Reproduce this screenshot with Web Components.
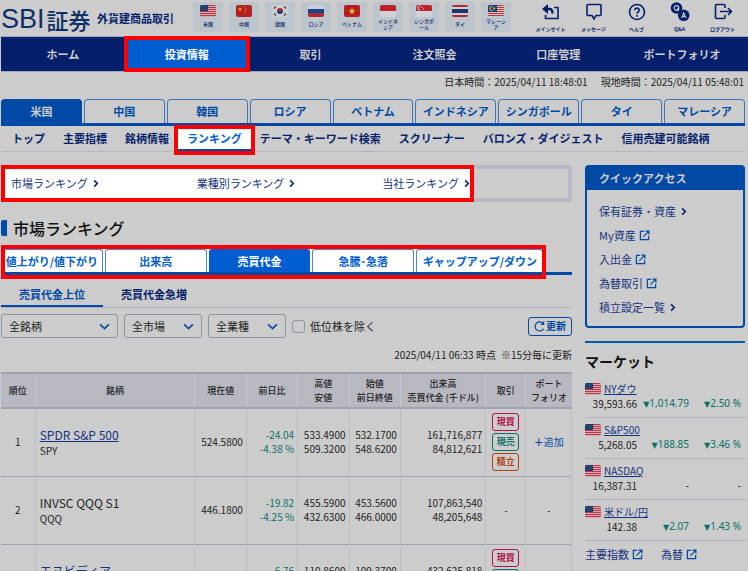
<!DOCTYPE html>
<html lang="ja">
<head>
<meta charset="utf-8">
<title>SBI証券 外貨建商品取引</title>
<style>
  html { background: #ccc; }
  body {
    margin: 0;
    height: 100vh;
    overflow: hidden;
    color: #222;
    font: 11px/14px "Noto Sans CJK JP", sans-serif;
    --navy: #061f6b;
    --blue: #0049a4;
    --bright: #005dd0;
    --line: #a0a4b2;
    --mark: #f00;
  }
</style>
</head>
<body>
<trade-app></trade-app>

<script>
const base = `
  * { box-sizing: border-box; }
  a { color: inherit; text-decoration: none; }
  button { font: inherit; color: inherit; background: none; border: 0; padding: 0; margin: 0; }
  svg { display: block; }
`;

function define(name, css, html, setup) {
  const template = document.createElement('template');
  template.innerHTML = '<style>' + base + css + '</style>' + html;

  class Part extends HTMLElement {
    static get observedAttributes() {
      return ['code', 'name'];
    }

    constructor() {
      super();
      this.attachShadow({ mode: 'open' });
      this.shadowRoot.appendChild(template.content.cloneNode(true));
    }

    connectedCallback() {
      if (setup) setup(this, this.shadowRoot);
    }

    // icons get their name from the element around them, after they connect
    attributeChangedCallback() {
      if (setup && this.isConnected) setup(this, this.shadowRoot);
    }
  }
  window.customElements.define(name, Part);
}

const flags = {
  us: '<path fill="#d8a9ae" d="M0 0h16v12H0z"/><path stroke="#b8374b" d="M0 .5h16M0 2.5h16M0 4.5h16M0 6.5h16M0 8.5h16M0 10.5h16"/><path fill="#1b3a68" d="M0 0h8v6H0z"/><path stroke="#657b9b" stroke-width=".6" stroke-dasharray=".6 1" d="M1 1.5h6M1 3h6M1 4.5h6"/>',
  cn: '<path fill="#b51f22" d="M0 0h16v12H0z"/><path fill="#d9b32a" d="M4 2l.6 1.5h1.6L5 4.500l.5 1.600L4 5.200 2.600 6.100 3 4.500 1.800 3.500h1.600z"/><path fill="#d9b32a" d="M8 1h1v1H8zM9.500 3h1v1h-1zM9.500 5h1v1h-1zM8 6.700h1v1H8z"/>',
  kr: '<path fill="#ccd0d3" d="M0 0h16v12H0z"/><path fill="#b22234" d="M5 6a3 3 0 016 0z"/><path fill="#173f82" d="M5 6a3 3 0 006 0z"/><path stroke="#222" stroke-width="1.600" stroke-dasharray=".7 .3" d="M2 3.500l2-2M12 1.500l2 2M2 8.500l2 2M12 10.500l2-2"/>',
  ru: '<path fill="#ccd0d6" d="M0 0h16v4H0z"/><path fill="#14458f" d="M0 4h16v4H0z"/><path fill="#b32630" d="M0 8h16v4H0z"/>',
  vn: '<path fill="#b51f22" d="M0 0h16v12H0z"/><path fill="#ddc52a" d="M8 2.500l.9 2.500h2.600L9.400 6.600l.8 2.600L8 7.700 5.800 9.200l.8-2.600L4.500 5h2.600z"/>',
  id: '<path fill="#c0222c" d="M0 0h16v6H0z"/><path fill="#d0d3d6" d="M0 6h16v6H0z"/>',
  sg: '<path fill="#c0222c" d="M0 0h16v6H0z"/><path fill="#d0d3d6" d="M0 6h16v6H0z"/><path fill="none" stroke="#ddd" d="M4.500 1.200a2 2 0 100 3.600"/><path fill="#ddd" d="M5.500 2h1v1h-1zM7 3.500h1v1H7z"/>',
  th: '<path fill="#b32630" d="M0 0h16v12H0z"/><path fill="#ccd0d6" d="M0 2h16v8H0z"/><path fill="#1d3768" d="M0 4h16v4H0z"/>',
  my: '<path fill="#ccc9c9" d="M0 0h16v12H0z"/><path stroke="#bd3440" d="M0 .5h16M0 2.500h16M0 4.500h16M0 6.500h16M0 8.500h16M0 10.500h16"/><path fill="#183c7a" d="M0 0h9v7H0z"/><path fill="none" stroke="#d8bd2d" stroke-width="1.200" d="M4.500 1.600a2 2 0 100 3.800"/><path fill="#d8bd2d" d="M5.200 2.500h2v2h-2z"/>'
};

define('flag-icon', `
  :host { display: block; width: 16px; height: 12px; border-radius: 2px; overflow: hidden; flex: none; }
`, '<svg width="16" height="12" viewBox="0 0 16 12"></svg>', (el, root) => {
  root.querySelector('svg').innerHTML = flags[el.getAttribute('code')] || '';
});

const icons = {
  back: '<path d="M13 5.500h4v11H4.500V13"/><path stroke-width="2.400" d="M5 7h3.500q3 0 3 4.500"/><path fill="currentColor" stroke="none" d="M1 7l6-5v10z"/>',
  message: '<path d="M3.500 2.500h12.500a1 1 0 011 1v9a1 1 0 01-1 1h-4l-2 3.500-2-3.500h-4a1 1 0 01-1-1v-9a1 1 0 011-1z"/>',
  help: '<circle cx="10" cy="10" r="7.500"/><path d="M7.800 8.300c0-3 4.500-2.800 4.400 0 0 1.700-2.200 1.700-2.200 3.500M10 13v1.800"/>',
  qa: '<circle cx="6.500" cy="6" r="5.800" fill="currentColor" stroke="none"/><circle cx="13.700" cy="13.300" r="5.800" fill="currentColor" stroke="none"/><circle cx="6.500" cy="6" r="2.300" stroke="#ccc" stroke-width="1.200"/><path stroke="#ccc" stroke-width="1.200" d="M7 6.500l2 2M11.700 16l2-5 2 5M12.400 14.500h2.600"/>',
  logout: '<path d="M12 6V3.500a1 1 0 00-1-1H3.500a1 1 0 00-1 1v12a1 1 0 001 1H11a1 1 0 001-1V13M7 9.500h11M15 6l3.500 3.500L15 13"/>',
  arrow: '<path stroke-width="3.500" d="M7 3l7 7-7 7"/>',
  down: '<path stroke-width="3" d="M2 6l8 8 8-8"/>',
  window: '<path stroke-width="2.200" d="M9 2.500H2.500v15h15V11M11.500 2h6.500v6.500M18 2L8 12"/>',
  reload: '<path stroke-width="2.200" d="M17 5a8.300 8.300 0 10.500 9M17.500 1v5h-5"/>'
};

define('line-icon', `
  :host { display: inline-block; width: 20px; height: 20px; flex: none; }
  svg { width: 100%; height: 100%; }
`, '<svg viewBox="0 0 20 20" fill="none" stroke="currentColor" stroke-width="1.6"></svg>', (el, root) => {
  root.querySelector('svg').innerHTML = icons[el.getAttribute('name')] || '';
});

define('country-tile', `
  :host { display: block; width: 30px; height: 30px; background: #bcc4cc; border-radius: 2px; color: var(--navy); }
  a { display: flex; flex-direction: column; align-items: center; height: 100%; padding: 3px 0 1px; }
  span { display: grid; place-content: center; flex: 1; width: 20px; font-size: 5px; line-height: 6px; text-align: center; font-weight: 500; }
`, '<a href="#"><flag-icon></flag-icon><span><slot></slot></span></a>', (el, root) => {
  root.querySelector('flag-icon').setAttribute('code', el.getAttribute('code'));
});

define('tool-link', `
  :host { display: block; width: 43px; color: var(--navy); }
  a { display: flex; flex-direction: column; align-items: center; gap: 3px; font-size: 5px; line-height: 8px; font-weight: 700; }
`, '<a href="#"><line-icon></line-icon><slot></slot></a>', (el, root) => {
  root.querySelector('line-icon').setAttribute('name', el.getAttribute('icon'));
});

define('site-header', `
  :host { display: flex; height: 37px; padding: 2px 8px 0 1px; border-bottom: 1px solid #a3a6bd; color: #0c2f66; }
  .logo { display: flex; align-items: center; gap: 2px; width: 96px; line-height: 30px; }
  .logo b { font: 400 27px/30px "Liberation Sans", sans-serif; }
  .logo span { font-size: 22px; font-weight: 500; }
  .sub { flex: 1; color: var(--navy); font-size: 11px; line-height: 32px; font-weight: 700; white-space: nowrap; }
  .tiles { display: flex; gap: 6px; }
  .tools { display: flex; margin-left: 18px; margin-right: -4px; }
`, `
  <a class="logo" href="#"><b>SBI</b><span>証券</span></a>
  <span class="sub">外貨建商品取引</span>
  <div class="tiles">
    <country-tile code="us">米国</country-tile>
    <country-tile code="cn">中国</country-tile>
    <country-tile code="kr">韓国</country-tile>
    <country-tile code="ru">ロシア</country-tile>
    <country-tile code="vn">ベトナム</country-tile>
    <country-tile code="id">インドネシア</country-tile>
    <country-tile code="sg">シンガポール</country-tile>
    <country-tile code="th">タイ</country-tile>
    <country-tile code="my">マレーシア</country-tile>
  </div>
  <div class="tools">
    <tool-link icon="back">メインサイト</tool-link>
    <tool-link icon="message">メッセージ</tool-link>
    <tool-link icon="help">ヘルプ</tool-link>
    <tool-link icon="qa">Q&amp;A</tool-link>
    <tool-link icon="logout">ログアウト</tool-link>
  </div>
`);

define('global-nav', `
  :host { display: block; margin-left: 1px; padding-right: 4px; background: var(--navy); color: #ccc; border-bottom: 1px solid #a3a6bd; }
  nav { display: grid; grid-template-columns: repeat(6, 1fr); }
  a { display: block; text-align: center; line-height: 34px; font-weight: 700; }
  a.on { background: var(--bright); color: #fff; outline: 4px solid var(--mark); outline-offset: -3px; }
`, `
  <nav>
    <a href="#">ホーム</a><a class="on" href="#">投資情報</a><a href="#">取引</a>
    <a href="#">注文照会</a><a href="#">口座管理</a><a href="#">ポートフォリオ</a>
  </nav>
`);

define('clock-bar', `
  :host { display: flex; justify-content: flex-end; gap: 13px; padding: 3px 4px 10px; font-size: 10px; }
`, '<span>日本時間：2025/04/11 18:48:01</span><span>現地時間：2025/04/11 05:48:01</span>');

define('country-tabs', `
  :host { display: block; margin: 0 3px 0 1px; border-bottom: 3px solid var(--blue); color: var(--blue); }
  nav { display: grid; grid-template-columns: repeat(9, 1fr); gap: 2px; }
  a { border: 1px solid #3f78b8; border-bottom: 0; border-radius: 4px 4px 0 0; text-align: center; line-height: 23px; font-weight: 700; white-space: nowrap; }
  a.on { background: var(--blue); border-color: var(--blue); color: #ccc; }
`, `
  <nav>
    <a class="on" href="#">米国</a><a href="#">中国</a><a href="#">韓国</a><a href="#">ロシア</a><a href="#">ベトナム</a>
    <a href="#">インドネシア</a><a href="#">シンガポール</a><a href="#">タイ</a><a href="#">マレーシア</a>
  </nav>
`);

define('sub-nav', `
  :host { display: block; margin: 0 3px 0 1px; border-bottom: 1px solid #b4b6c2; color: var(--navy); }
  nav { display: flex; padding: 3px 0 0 2px; }
  a { padding: 0 9px 1px; line-height: 19px; font-weight: 700; white-space: nowrap; border-bottom: 2px solid transparent; }
  a.on { background: #fff; color: var(--bright); border-color: var(--blue); outline: 4px solid var(--mark); }
`, `
  <nav>
    <a href="#">トップ</a><a href="#">主要指標</a><a href="#">銘柄情報</a><a class="on" href="#">ランキング</a>
    <a href="#">テーマ・キーワード検索</a><a href="#">スクリーナー</a><a href="#">バロンズ・ダイジェスト</a><a href="#">信用売建可能銘柄</a>
  </nav>
`);

define('ranking-menu', `
  :host { display: block; position: relative; border: 4px solid #b7bac6; border-radius: 3px; color: #14337f; }
  nav { display: grid; grid-template-columns: repeat(3, 1fr); position: relative; z-index: 1; padding-left: 6px; }
  a { display: flex; align-items: center; gap: 3px; line-height: 29px; white-space: nowrap; }
  line-icon { width: 9px; height: 9px; color: var(--navy); }
  .mark { position: absolute; inset: -4px auto -4px -4px; width: 84%; background: #fff; border: 4px solid var(--mark); }
`, `
  <div class="mark"></div>
  <nav>
    <a href="#">市場ランキング <line-icon name="arrow"></line-icon></a>
    <a href="#">業種別ランキング <line-icon name="arrow"></line-icon></a>
    <a href="#">当社ランキング <line-icon name="arrow"></line-icon></a>
  </nav>
`);

define('page-title', `
  :host { display: block; margin: 17px 0 12px; }
  h1 { display: flex; align-items: center; gap: 6px; margin: 0; font-size: 16px; line-height: 18px; font-weight: 500; color: #111; }
  h1::before { content: ""; width: 6px; height: 16px; background: var(--blue); border-radius: 2px 0 0 2px; }
`, '<h1><slot></slot></h1>');

define('ranking-tabs', `
  :host { display: block; border-bottom: 3px solid var(--blue); color: var(--bright); }
  nav { display: grid; grid-template-columns: repeat(4, 4fr) 5fr; gap: 2px; position: relative; width: 95%; background: #fff; }
  a { border: 1px solid #4a87cf; border-bottom: 0; border-radius: 3px 3px 0 0; text-align: center; line-height: 22px; font-weight: 700; white-space: nowrap; }
  a.on { background: var(--bright); border-color: var(--bright); color: #fff; }
  nav::after { content: ""; position: absolute; inset: -4px -3px -7px 0; border: 4px solid var(--mark); pointer-events: none; }
`, `
  <nav>
    <a href="#">値上がり/値下がり</a><a href="#">出来高</a><a class="on" href="#">売買代金</a>
    <a href="#">急騰･急落</a><a href="#">ギャップアップ/ダウン</a>
  </nav>
`);

define('period-tabs', `
  :host { display: block; margin-top: 9px; border-bottom: 1px solid #b0b2c0; color: var(--navy); }
  nav { display: flex; }
  a { padding: 0 18px; line-height: 21px; font-weight: 700; border-bottom: 2px solid transparent; }
  a.on { color: var(--blue); border-color: var(--blue); }
`, '<nav><a class="on" href="#">売買代金上位</a><a href="#">売買代金急増</a></nav>');

define('select-box', `
  :host { display: block; position: relative; width: 78px; }
  select { appearance: none; width: 100%; height: 24px; margin: 0; padding: 0 7px; border: 1px solid #8f93a3; border-radius: 3px; background: transparent; color: #222; font: inherit; }
  line-icon { position: absolute; right: 8px; top: 7px; width: 11px; height: 11px; color: var(--blue); pointer-events: none; }
`, '<select></select><line-icon name="down"></line-icon>', (el, root) => {
  const select = root.querySelector('select');
  select.add(new Option(el.getAttribute('value')));
  select.setAttribute('aria-label', el.getAttribute('label'));
});

define('filter-bar', `
  :host { display: flex; align-items: center; gap: 6px; margin-top: 6px; }
  .wide { width: 117px; }
  label { display: flex; align-items: center; gap: 5px; }
  input { appearance: none; width: 13px; height: 13px; margin: 0; border: 1px solid #8f93a3; border-radius: 3px; }
  button { display: flex; align-items: center; justify-content: center; gap: 1px; width: 44px; height: 19px; margin-left: auto; border: 1px solid var(--blue); border-radius: 3px; color: var(--blue); font-size: 10px; font-weight: 700; }
  button line-icon { width: 11px; height: 11px; }
`, `
  <select-box class="wide" label="銘柄" value="全銘柄"></select-box>
  <select-box label="市場" value="全市場"></select-box>
  <select-box label="業種" value="全業種"></select-box>
  <label><input type="checkbox">低位株を除く</label>
  <button type="button"><line-icon name="reload"></line-icon>更新</button>
`);

define('trade-button', `
  :host { display: block; width: 27px; color: #b5104e; }
  :host([kind="sell"]) { color: #0a7068; }
  :host([kind="fund"]) { color: #b5400f; }
  button { display: block; width: 100%; height: 18px; border: 1px solid; border-radius: 3px; font-size: 9px; line-height: 14px; font-weight: 700; }
`, '<button type="button"><slot></slot></button>');

const stocks = [
  { name: 'SPDR S&amp;P 500', code: 'SPY', link: true, price: '524.5800', diff: '-24.04', rate: '-4.38 %', high: '533.4900', low: '509.3200', open: '532.1700', close: '548.6200', volume: '161,716,877', value: '84,812,621', trade: true },
  { name: 'INVSC QQQ S1', code: 'QQQ', price: '446.1800', diff: '-19.82', rate: '-4.25 %', high: '455.5900', low: '432.6300', open: '453.5600', close: '466.0000', volume: '107,863,540', value: '48,205,648' },
  { name: 'エヌビディア', code: 'NVDA', link: true, price: '107.5700', diff: '-6.76', rate: '-5.91 %', high: '110.8600', low: '99.1500', open: '109.3700', close: '114.3300', volume: '432,625,818', value: '45,865,128', trade: true }
];

define('ranking-table', `
  :host { display: block; }
  p { margin: 10px 0; text-align: right; font-size: 10px; line-height: 14px; }
  table { width: 100%; border-collapse: collapse; table-layout: fixed; border-top: 2px solid var(--line); }
  th { height: 35px; padding: 0; background: #b7b8c0; border: 1px solid #c8c9ce; border-width: 0 1px; font-size: 9px; line-height: 14px; font-weight: 500; white-space: nowrap; }
  th:first-child, td:first-child { border-left: 0; }
  th:last-child { border-right: 0; }
  tr { border-bottom: 2px solid var(--line); }
  tbody tr { border-bottom-width: 1px; }
  td { height: 68px; padding: 0 3px; border-right: 1px solid #bbbcc4; font-size: 10px; text-align: right; white-space: nowrap; }
  td.mid { text-align: center; }
  td.name { padding-left: 4px; text-align: left; line-height: 15px; }
  .name a { color: #14337f; text-decoration: underline; }
  .name a, .name b { font-size: 12px; font-weight: 400; }
  .down { color: #0a7068; }
  .add { color: var(--blue); }
  .buttons { display: grid; gap: 2px; justify-content: center; }
`, `
  <p>2025/04/11 06:33 時点&ensp;※15分毎に更新</p>
  <table>
    <colgroup>
      <col style="width:6%"><col style="width:28%"><col style="width:9%"><col style="width:9%"><col style="width:9%">
      <col style="width:9%"><col style="width:15%"><col style="width:7%"><col style="width:8%">
    </colgroup>
    <thead>
      <tr>
        <th>順位</th><th>銘柄</th><th>現在値</th><th>前日比</th><th>高値<br>安値</th><th>始値<br>前日終値</th>
        <th>出来高<br>売買代金 (千ドル)</th><th>取引</th><th>ポート<br>フォリオ</th>
      </tr>
    </thead>
    <tbody></tbody>
  </table>
`, (el, root) => {
  const buttons = `<div class="buttons">
    <trade-button>現買</trade-button><trade-button kind="sell">現売</trade-button><trade-button kind="fund">積立</trade-button>
  </div>`;
  root.querySelector('tbody').innerHTML = stocks.map((s, i) => `<tr>
    <td class="mid">${i + 1}</td>
    <td class="name">${s.link ? `<a href="#">${s.name}</a>` : `<b>${s.name}</b>`}<br>${s.code}</td>
    <td>${s.price}</td>
    <td class="down">${s.diff}<br>${s.rate}</td>
    <td>${s.high}<br>${s.low}</td>
    <td>${s.open}<br>${s.close}</td>
    <td>${s.volume}<br>${s.value}</td>
    <td class="mid">${s.trade ? buttons : '-'}</td>
    <td class="mid">${s.trade ? '<a class="add" href="#"><b>＋</b>追加</a>' : '-'}</td>
  </tr>`).join('');
});

define('quick-access', `
  :host { display: block; border: 2px solid var(--blue); border-radius: 4px; color: #14337f; }
  h2 { margin: 0; padding-left: 12px; background: var(--blue); color: #ccc; font-size: 11px; line-height: 23px; font-weight: 700; }
  ul { display: grid; gap: 10px; margin: 0; padding: 14px 12px 12px; list-style: none; }
  a { display: flex; align-items: center; gap: 3px; }
  line-icon { width: 11px; height: 11px; color: var(--blue); }
  line-icon[name="arrow"] { width: 9px; height: 9px; color: var(--navy); }
`, `
  <h2>クイックアクセス</h2>
  <ul>
    <li><a href="#">保有証券・資産 <line-icon name="arrow"></line-icon></a></li>
    <li><a href="#">My資産<line-icon name="window"></line-icon></a></li>
    <li><a href="#">入出金<line-icon name="window"></line-icon></a></li>
    <li><a href="#">為替取引<line-icon name="window"></line-icon></a></li>
    <li><a href="#">積立設定一覧 <line-icon name="arrow"></line-icon></a></li>
  </ul>
`);

define('market-row', `
  :host { display: block; padding: 5px 4px 6px 0; border-bottom: 1px solid #b0b2c0; }
  .name { display: flex; align-items: center; gap: 3px; height: 14px; font-size: 10px; }
  .name a { color: #14337f; text-decoration: underline; }
  .values { display: grid; grid-template-columns: 52px 1fr 1fr; line-height: 15px; font-size: 10px; text-align: right; }
  .move { color: #0a7068; font-family: "Noto Sans", "DejaVu Sans", sans-serif; white-space: nowrap; }
  .move.none { color: #222; }
  .move:not(.none)::before { content: "▼"; font-size: 8px; }
`, `
  <div class="name"><flag-icon code="us"></flag-icon><a href="#"><slot></slot></a></div>
  <div class="values"><span class="price"></span><span class="move"></span><span class="move"></span></div>
`, (el, root) => {
  const [diff, rate] = root.querySelectorAll('.move');
  root.querySelector('.price').textContent = el.getAttribute('price');
  diff.textContent = el.getAttribute('diff') || '-';
  rate.textContent = el.getAttribute('rate') || '-';
  diff.classList.toggle('none', !el.hasAttribute('diff'));
  rate.classList.toggle('none', !el.hasAttribute('rate'));
});

define('market-panel', `
  :host { display: block; margin-top: 13px; border-top: 2px solid #0a57ab; }
  h2 { margin: 9px 0 7px; font-size: 14px; line-height: 18px; font-weight: 700; color: #111; }
  .more { display: flex; gap: 18px; padding-top: 6px; color: #14337f; }
  .more a { display: flex; align-items: center; gap: 3px; }
  .more line-icon { width: 11px; height: 11px; color: var(--blue); }
`, `
  <h2>マーケット</h2>
  <market-row price="39,593.66" diff="1,014.79" rate="2.50 %">NYダウ</market-row>
  <market-row price="5,268.05" diff="188.85" rate="3.46 %">S&amp;P500</market-row>
  <market-row price="16,387.31">NASDAQ</market-row>
  <market-row price="142.38" diff="2.07" rate="1.43 %">米ドル/円</market-row>
  <div class="more">
    <a href="#">主要指数<line-icon name="window"></line-icon></a>
    <a href="#">為替<line-icon name="window"></line-icon></a>
  </div>
`);

define('trade-app', `
  :host { display: block; }
  .columns { display: grid; grid-template-columns: minmax(0, 1fr) 160px; gap: 13px; padding: 13px 3px 0 1px; align-items: start; }
`, `
  <site-header></site-header>
  <global-nav></global-nav>
  <clock-bar></clock-bar>
  <country-tabs></country-tabs>
  <sub-nav></sub-nav>
  <div class="columns">
    <main>
      <ranking-menu></ranking-menu>
      <page-title>市場ランキング</page-title>
      <ranking-tabs></ranking-tabs>
      <period-tabs></period-tabs>
      <filter-bar></filter-bar>
      <ranking-table></ranking-table>
    </main>
    <aside>
      <quick-access></quick-access>
      <market-panel></market-panel>
    </aside>
  </div>
`);
</script>
</body>
</html>
